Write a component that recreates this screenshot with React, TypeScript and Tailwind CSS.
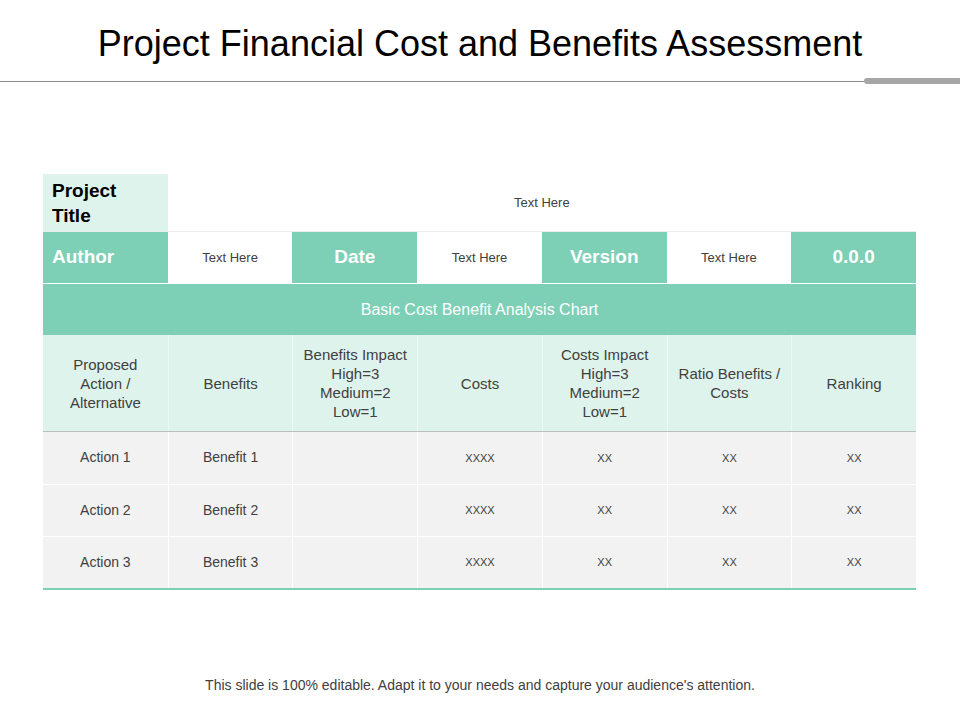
const font = { fontFamily: '"Liberation Sans", Arial, sans-serif' }

const rows = [
  ["Action 1", "Benefit 1"],
  ["Action 2", "Benefit 2"],
  ["Action 3", "Benefit 3"],
]

const heads = [
  "Proposed Action / Alternative",
  "Benefits",
  "Benefits Impact High=3 Medium=2 Low=1",
  "Costs",
  "Costs Impact High=3 Medium=2 Low=1",
  "Ratio Benefits / Costs",
  "Ranking",
]

export default function App() {
  return (
    <div className="relative h-[720px] w-[960px] bg-white text-[#404040]" style={font}>
      <h1 className="pt-[22px] text-center text-[36px] leading-[44px] text-black">
        Project Financial Cost and Benefits Assessment
      </h1>
      <div className="mt-[12px] flex items-center">
        <div className="h-px w-[864px] bg-[#8a8a8a]" />
        <div className="h-[6px] flex-1 rounded-l-full bg-[#a6a6a6]" />
      </div>

      <div className="ml-[43px] mt-[90px] w-[873px]">
        <div className="grid h-[57px] grid-cols-7">
          <div className="flex flex-col justify-center bg-[#dff3ed] px-[9px] text-[19px] font-bold leading-[25px] text-black">
            <span>Project</span>
            <span>Title</span>
          </div>
          <div className="col-span-6 flex items-center justify-center text-[13px]">Text Here</div>
        </div>
        <div className="grid h-[52px] grid-cols-7 border-t border-[#ececec]">
          <div className="flex items-center bg-[#7dcfb5] px-[9px] text-[19px] font-bold text-white">Author</div>
          <div className="flex items-center justify-center text-[13px]">Text Here</div>
          <div className="flex items-center justify-center bg-[#7dcfb5] text-[19px] font-bold text-white">Date</div>
          <div className="flex items-center justify-center text-[13px]">Text Here</div>
          <div className="flex items-center justify-center bg-[#7dcfb5] text-[19px] font-bold text-white">Version</div>
          <div className="flex items-center justify-center text-[13px]">Text Here</div>
          <div className="flex items-center justify-center bg-[#7dcfb5] text-[19px] font-bold text-white">0.0.0</div>
        </div>
        <div className="mt-px flex h-[51px] items-center justify-center bg-[#7dcfb5] text-[16px] text-white">
          Basic Cost Benefit Analysis Chart
        </div>
        <div className="grid h-[97px] grid-cols-7 border-b border-[#bdbdbd] bg-[#dff3ed]">
          {heads.map((h, i) => (
            <div
              key={h}
              className={
                "flex items-center justify-center px-[8px] text-center text-[15px] leading-[19px] " +
                (i > 0 ? "border-l border-[#eef9f5]" : "")
              }
            >
              {h}
            </div>
          ))}
        </div>
        {rows.map((r, ri) => (
          <div
            key={ri}
            className={
              "grid h-[52.5px] grid-cols-7 bg-[#f2f2f2] " +
              (ri < 2 ? "border-b border-[#ffffff]" : "border-b-2 border-[#7dcfb5]")
            }
          >
            {[r[0], r[1], "", "XXXX", "XX", "XX", "XX"].map((c, ci) => (
              <div
                key={ci}
                className={
                  "flex items-center justify-center " +
                  (ci > 0 ? "border-l border-[#ffffff] " : "") +
                  (ci >= 3 ? "text-[11px]" : "text-[14px]")
                }
              >
                {c}
              </div>
            ))}
          </div>
        ))}
      </div>

      <p className="absolute bottom-[24px] left-0 w-full text-center text-[14px] text-[#404040]">
        This slide is 100% editable. Adapt it to your needs and capture your audience's attention.
      </p>
    </div>
  )
}
